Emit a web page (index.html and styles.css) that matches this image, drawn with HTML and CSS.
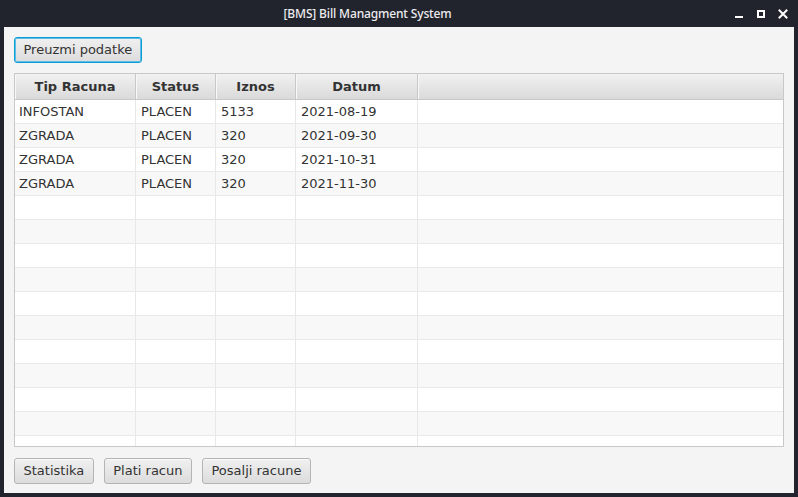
FILE: index.html
```html
<!DOCTYPE html>
<html>
<head>
<meta charset="utf-8">
<link rel="stylesheet" href="styles.css">
</head>
<body>
<div class="window">
  <div class="titlebar">
    <div class="title">[BMS] Bill Managment System</div>
    <div class="controls">
      <span class="ctl"><svg width="22" height="27" viewBox="0 0 22 27"><rect x="7" y="16" width="8" height="2" fill="#ffffff"/></svg></span>
      <span class="ctl"><svg width="22" height="27" viewBox="0 0 22 27"><rect x="8" y="11" width="6" height="6" fill="none" stroke="#ffffff" stroke-width="2"/></svg></span>
      <span class="ctl"><svg width="22" height="27" viewBox="0 0 22 27"><path d="M7.5 10.5 L14.5 17.5 M14.5 10.5 L7.5 17.5" stroke="#ffffff" stroke-width="2" stroke-linecap="square"/></svg></span>
    </div>
  </div>
  <div class="content">
    <div class="toolbar">
      <button class="btn focused">Preuzmi podatke</button>
    </div>
    <div class="table">
      <div class="row header">
        <div class="cell">Tip Racuna</div>
        <div class="cell">Status</div>
        <div class="cell">Iznos</div>
        <div class="cell">Datum</div>
        <div class="cell"></div>
      </div>
      <div class="row"><div class="cell">INFOSTAN</div><div class="cell">PLACEN</div><div class="cell">5133</div><div class="cell">2021-08-19</div><div class="cell"></div></div>
      <div class="row alt"><div class="cell">ZGRADA</div><div class="cell">PLACEN</div><div class="cell">320</div><div class="cell">2021-09-30</div><div class="cell"></div></div>
      <div class="row"><div class="cell">ZGRADA</div><div class="cell">PLACEN</div><div class="cell">320</div><div class="cell">2021-10-31</div><div class="cell"></div></div>
      <div class="row alt"><div class="cell">ZGRADA</div><div class="cell">PLACEN</div><div class="cell">320</div><div class="cell">2021-11-30</div><div class="cell"></div></div>
      <div class="row"><div class="cell"></div><div class="cell"></div><div class="cell"></div><div class="cell"></div><div class="cell"></div></div>
      <div class="row alt"><div class="cell"></div><div class="cell"></div><div class="cell"></div><div class="cell"></div><div class="cell"></div></div>
      <div class="row"><div class="cell"></div><div class="cell"></div><div class="cell"></div><div class="cell"></div><div class="cell"></div></div>
      <div class="row alt"><div class="cell"></div><div class="cell"></div><div class="cell"></div><div class="cell"></div><div class="cell"></div></div>
      <div class="row"><div class="cell"></div><div class="cell"></div><div class="cell"></div><div class="cell"></div><div class="cell"></div></div>
      <div class="row alt"><div class="cell"></div><div class="cell"></div><div class="cell"></div><div class="cell"></div><div class="cell"></div></div>
      <div class="row"><div class="cell"></div><div class="cell"></div><div class="cell"></div><div class="cell"></div><div class="cell"></div></div>
      <div class="row alt"><div class="cell"></div><div class="cell"></div><div class="cell"></div><div class="cell"></div><div class="cell"></div></div>
      <div class="row"><div class="cell"></div><div class="cell"></div><div class="cell"></div><div class="cell"></div><div class="cell"></div></div>
      <div class="row alt"><div class="cell"></div><div class="cell"></div><div class="cell"></div><div class="cell"></div><div class="cell"></div></div>
      <div class="row"><div class="cell"></div><div class="cell"></div><div class="cell"></div><div class="cell"></div><div class="cell"></div></div>
    </div>
    <div class="actions">
      <button class="btn">Statistika</button>
      <button class="btn">Plati racun</button>
      <button class="btn">Posalji racune</button>
    </div>
  </div>
</div>
</body>
</html>
```

FILE: styles.css
```css
html, body {
  margin: 0;
  padding: 0;
  background: #22242d;
}

.window {
  width: 798px;
  height: 497px;
  display: flex;
  flex-direction: column;
  background: #22242d;
}

.titlebar {
  height: 27px;
  display: flex;
  align-items: center;
  flex: none;
}

.title {
  flex: 1;
  text-align: center;
  padding-left: 7px;
  font-family: "Noto Sans", "Open Sans", sans-serif;
  font-size: 12px;
  font-weight: 500;
  letter-spacing: -0.15px;
  color: #ececef;
  line-height: 27px;
}

.controls {
  display: flex;
  padding-right: 4px;
}

.ctl {
  display: block;
  width: 22px;
  height: 27px;
}

.ctl svg {
  display: block;
}

.content {
  flex: 1;
  margin: 0 4px 4px 4px;
  background: #f4f4f4;
  padding: 10px 10px 9px 10px;
  display: flex;
  flex-direction: column;
  font-family: "DejaVu Sans", sans-serif;
  font-size: 13px;
  color: #333333;
}

.toolbar {
  display: flex;
  margin-bottom: 10px;
}

.btn {
  height: 26px;
  padding: 0 8.5px;
  font-family: "DejaVu Sans", sans-serif;
  font-size: 13px;
  color: #333333;
  background: linear-gradient(#f0f0f0, #dcdcdc);
  border: 1px solid #b4b4b4;
  border-radius: 3px;
  box-shadow: inset 0 1px 0 #fafafa;
  line-height: 24px;
}

.btn.focused {
  border: 1px solid #0a9cd6;
  box-shadow: inset 0 0 0 1px #5fbde6;
}

.table {
  height: 374px;
  box-sizing: border-box;
  border: 1px solid #c8c8c8;
  background: #ffffff;
  overflow: hidden;
  flex: none;
}

.row {
  display: grid;
  grid-template-columns: 121px 80px 80px 122px 1fr;
  height: 24px;
  box-sizing: border-box;
  border-bottom: 1px solid #e9e9e9;
  background: #ffffff;
}

.row.alt {
  background: #f8f8f8;
}

.cell {
  border-right: 1px solid #e8e8e8;
  padding-left: 4px;
  line-height: 23px;
  white-space: nowrap;
  overflow: hidden;
}

.row .cell:nth-child(n+2) {
  padding-left: 5px;
}

.row .cell:last-child {
  border-right: none;
}

.row.header {
  height: 26px;
  border-bottom: 1px solid #c8c8c8;
  background: linear-gradient(#f1f1f1, #dadada);
}

.row.header .cell {
  padding: 1px 0 0 0;
  text-align: center;
  font-weight: bold;
  line-height: 24px;
  border-right: 1px solid #c8c8c8;
  box-shadow: inset 1px 0 0 #f8f8f8;
}

.row.header .cell:last-child {
  border-right: none;
}

.actions {
  display: flex;
  gap: 10px;
  margin-top: 11px;
}
```
